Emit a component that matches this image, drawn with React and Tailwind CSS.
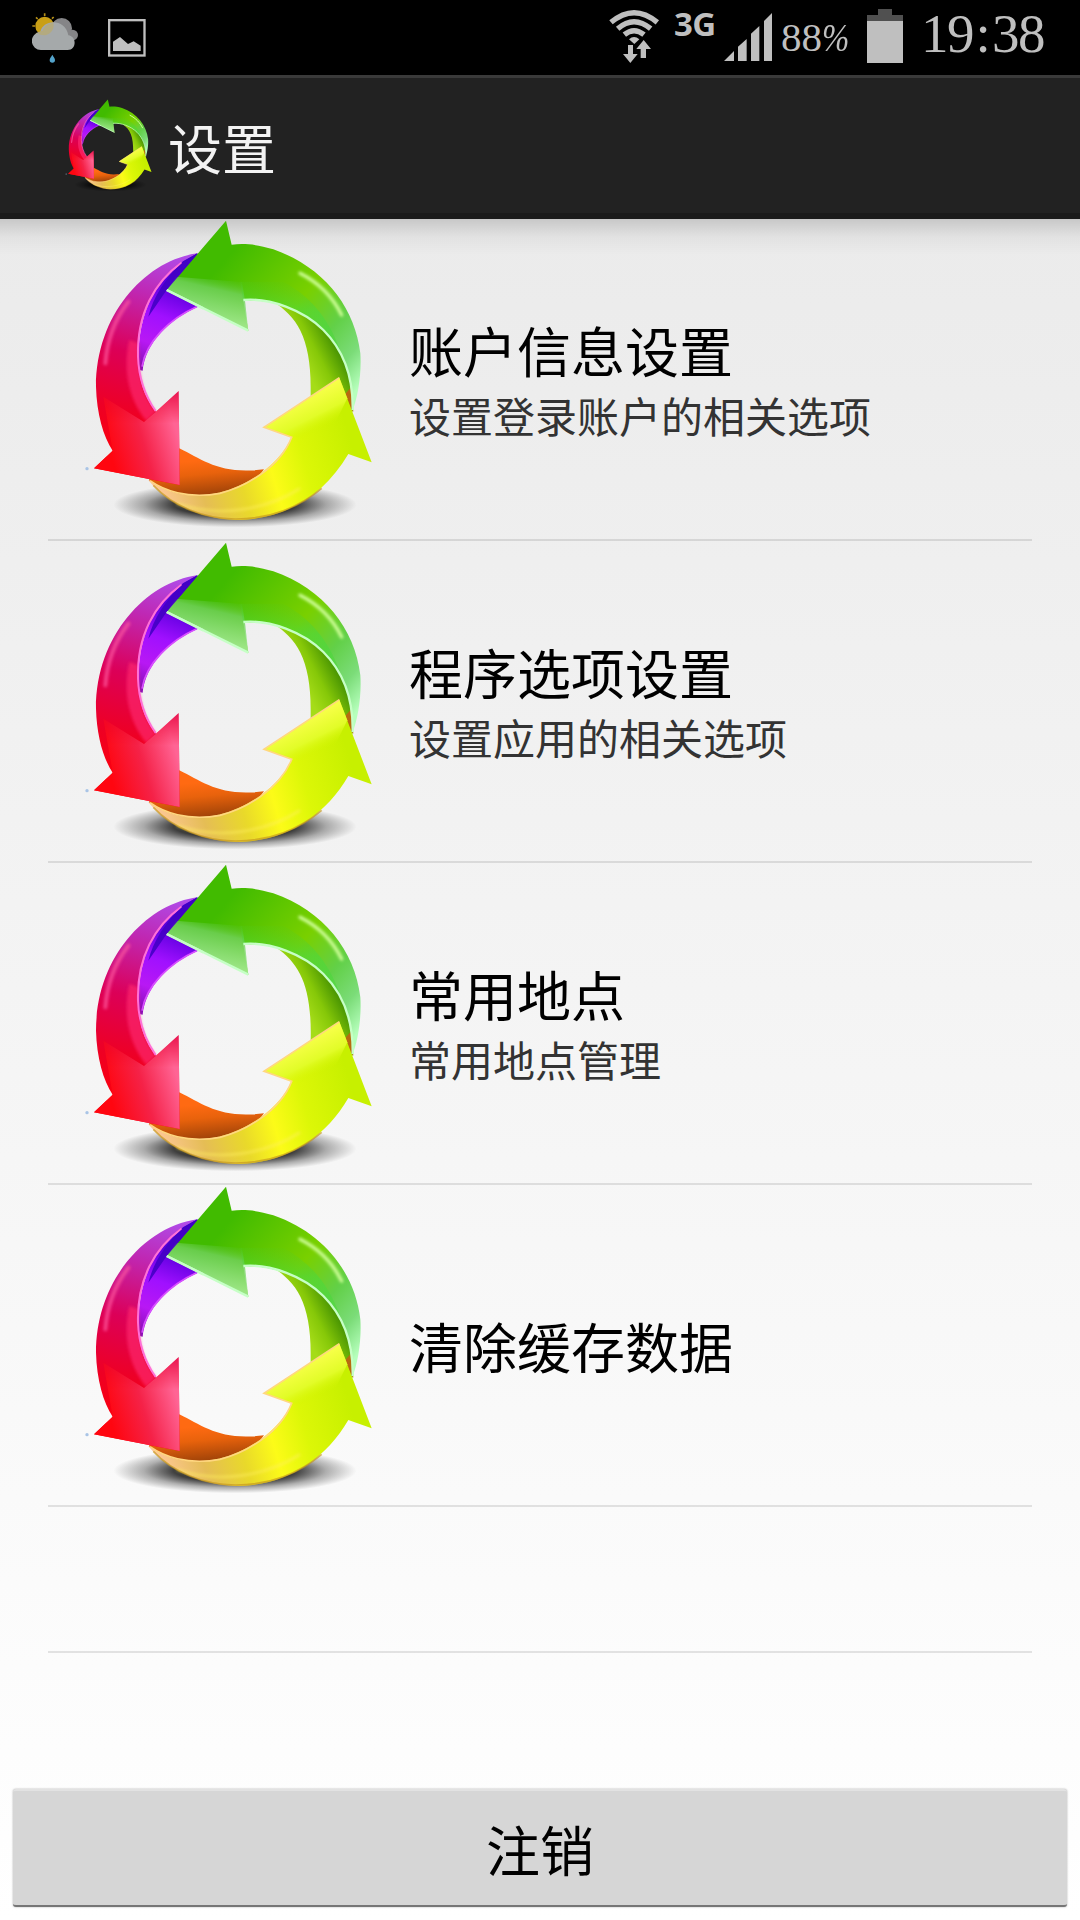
import { useId } from "react";

function RecycleIcon({ className }) {
  const id = useId().replace(/[^a-zA-Z0-9]/g, "");
  const u = (n) => `url(#${id}${n})`;
  return (
    <svg viewBox="0 27 960 960" className={className} aria-hidden="true">
      <defs>
        <linearGradient id={id + "red"} gradientUnits="userSpaceOnUse" x1="340" y1="140" x2="170" y2="780">
          <stop offset="0" stopColor="#b04be8" />
          <stop offset="0.2" stopColor="#bf28b4" />
          <stop offset="0.48" stopColor="#dc0058" />
          <stop offset="0.75" stopColor="#ee0024" />
          <stop offset="1" stopColor="#ff0008" />
        </linearGradient>
        <linearGradient id={id + "head"} gradientUnits="userSpaceOnUse" x1="130" y1="760" x2="330" y2="700">
          <stop offset="0" stopColor="#ff0610" />
          <stop offset="0.5" stopColor="#f52248" />
          <stop offset="1" stopColor="#ff6494" />
        </linearGradient>
        <linearGradient id={id + "fade"} gradientUnits="userSpaceOnUse" x1="0" y1="520" x2="0" y2="640">
          <stop offset="0" stopColor="#fff" stopOpacity="0" />
          <stop offset="1" stopColor="#fff" />
        </linearGradient>
        <mask id={id + "mask"} maskUnits="userSpaceOnUse" x="0" y="0" width="960" height="1000">
          <rect width="960" height="1000" fill={u("fade")} />
        </mask>
        <linearGradient id={id + "violet"} gradientUnits="userSpaceOnUse" x1="350" y1="140" x2="230" y2="470">
          <stop offset="0" stopColor="#3700c8" />
          <stop offset="0.3" stopColor="#6000e0" />
          <stop offset="0.55" stopColor="#a010ff" />
          <stop offset="0.8" stopColor="#b818f4" />
          <stop offset="1" stopColor="#8a10b8" />
        </linearGradient>
        <linearGradient id={id + "green"} gradientUnits="userSpaceOnUse" x1="440" y1="180" x2="860" y2="540">
          <stop offset="0" stopColor="#41bb00" />
          <stop offset="0.45" stopColor="#79d000" />
          <stop offset="0.68" stopColor="#62d048" />
          <stop offset="0.85" stopColor="#7bdc78" />
          <stop offset="1" stopColor="#b6ffbc" />
        </linearGradient>
        <linearGradient id={id + "gleam"} gradientUnits="userSpaceOnUse" x1="440" y1="190" x2="410" y2="320">
          <stop offset="0" stopColor="#50c020" stopOpacity="0" />
          <stop offset="0.35" stopColor="#6fd058" />
          <stop offset="1" stopColor="#a4ea9a" />
        </linearGradient>
        <linearGradient id={id + "under"} gradientUnits="userSpaceOnUse" x1="600" y1="200" x2="590" y2="290">
          <stop offset="0" stopColor="#50c828" stopOpacity="0" />
          <stop offset="1" stopColor="#4cd83c" />
        </linearGradient>
        <linearGradient id={id + "moss"} gradientUnits="userSpaceOnUse" x1="715" y1="490" x2="830" y2="430">
          <stop offset="0" stopColor="#a5dc18" />
          <stop offset="0.4" stopColor="#86c808" />
          <stop offset="1" stopColor="#358400" />
        </linearGradient>
        <linearGradient id={id + "yellow"} gradientUnits="userSpaceOnUse" x1="250" y1="820" x2="830" y2="650">
          <stop offset="0" stopColor="#ffc89a" />
          <stop offset="0.22" stopColor="#e5bd55" />
          <stop offset="0.42" stopColor="#e9d92a" />
          <stop offset="0.58" stopColor="#fcfb18" />
          <stop offset="0.75" stopColor="#dcf707" />
          <stop offset="1" stopColor="#c7f000" />
        </linearGradient>
        <linearGradient id={id + "tip"} gradientUnits="userSpaceOnUse" x1="700" y1="560" x2="750" y2="660">
          <stop offset="0" stopColor="#f8ff4a" />
          <stop offset="0.6" stopColor="#e2fc28" />
          <stop offset="1" stopColor="#d2f400" stopOpacity="0" />
        </linearGradient>
        <linearGradient id={id + "orange"} gradientUnits="userSpaceOnUse" x1="400" y1="750" x2="410" y2="855">
          <stop offset="0" stopColor="#ff6a12" />
          <stop offset="0.4" stopColor="#e8620c" />
          <stop offset="1" stopColor="#a04308" />
        </linearGradient>
        <radialGradient id={id + "shade"}>
          <stop offset="0" stopColor="#000" />
          <stop offset="0.5" stopColor="#000" stopOpacity="0.75" />
          <stop offset="0.75" stopColor="#000" stopOpacity="0.3" />
          <stop offset="1" stopColor="#000" stopOpacity="0" />
        </radialGradient>
        <filter id={id + "soft"} x="-30%" y="-30%" width="160%" height="160%">
          <feGaussianBlur stdDeviation="5" />
        </filter>
      </defs>
      <ellipse cx="495" cy="884" rx="365" ry="68" fill={u("shade")} />
      <path d="M382 130C290 160 190 290 208 480L218 482C225 400 300 325 385 290L420 200Z" fill={u("violet")} />
      <path d="M216 470C228 395 300 325 380 290" fill="none" stroke="#d850ff" strokeWidth="5" />
      <path d="M620 282C690 330 726 400 722 560L848 605C858 470 800 350 700 290Z" fill={u("moss")} />
      <path d="M845 530L850 605L818 560Z" fill="#b86a10" />
      <path d="M328 715C400 750 450 795 582 778C540 840 460 870 380 866C320 862 270 845 236 810Z" fill={u("orange")} />
      <path d="M235 810C290 845 330 857 400 855C500 850 625 775 665 682L582 652L808 503L905 757L835 732C760 860 640 930 495 930C390 925 290 880 235 810Z" fill={u("yellow")} />
      <path d="M582 652L808 503L832 565L770 690L712 692Z" fill={u("tip")} />
      <path d="M808 503L582 652L665 682C630 770 530 830 450 850C350 868 280 840 240 812" fill="none" stroke="#ffd780" strokeWidth="5" />
      <path d="M320 880C440 925 590 900 690 835" fill="none" stroke="#fff060" strokeWidth="8" opacity="0.55" filter={u("soft")} />
      <path d="M250 826C310 890 400 925 495 927C600 928 690 890 755 835" fill="none" stroke="#c89a20" strokeWidth="5" opacity="0.7" />
      <path d="M468 32L290 240L535 362L520 272C600 265 700 300 760 360C820 420 850 500 848 600C864 560 875 490 871 430C855 290 760 170 610 118C560 102 520 100 485 104Z" fill={u("green")} />
      <path d="M318 200L516 216L525 272L535 362L290 240Z" fill={u("gleam")} opacity="0.85" />
      <path d="M510 215L640 215C715 255 775 320 810 420C730 300 620 262 520 272Z" fill={u("under")} opacity="0.6" />
      <path d="M290 240L535 362M520 270C600 263 700 300 760 360C820 420 850 500 848 600" fill="none" stroke="#c6ffc6" strokeWidth="7" />
      <path d="M690 190C750 220 790 265 815 315" fill="none" stroke="#d0ff9a" strokeWidth="10" strokeLinecap="round" filter={u("soft")} />
      <path d="M382 130C230 150 78 310 78 530C80 610 100 680 128 722L72 775L329 825L326 543L258 605C215 550 206 500 204 430C206 310 255 220 340 153Z" fill={u("red")} />
      <path d="M206 400C206 500 215 550 258 605L230 634C170 560 160 470 178 390Z" fill="#ff2a70" opacity="0.65" filter={u("soft")} />
      <path d="M128 722L72 775L329 825L326 543L258 605L222 636L100 560Z" fill={u("head")} mask={u("mask")} />
      <path d="M335 158C255 215 200 310 204 440C206 500 220 550 257 603" fill="none" stroke="#ff70d8" strokeWidth="6" />
      <path d="M106 460C112 380 140 320 175 275" fill="none" stroke="#ff5aa0" strokeWidth="12" strokeLinecap="round" opacity="0.7" filter={u("soft")} />
      <path d="M382 130L340 155C285 205 250 260 235 320L290 240L380 134Z" fill="#4300c4" opacity="0.9" />
      <path d="M290 240L400 295" stroke="#c6ffc6" strokeWidth="7" />
      <circle cx="51" cy="776" r="5" fill="#a9c4e6" />
    </svg>
  );
}

function WeatherIcon() {
  return (
    <svg viewBox="96 36 141 153" className="mt-3 ml-8 h-[51px] w-[47px] shrink-0">
      <g stroke="#b58f18" strokeWidth="5">
        <path d="M134 40v8M134 108v8M97 78h8M164 78h8M108 52l5 5M161 51l-5 5M108 104l5-5M161 104l-5-5" />
      </g>
      <circle cx="134" cy="78" r="28" fill="#c99f16" />
      <circle cx="185" cy="85" r="31" fill="#858587" />
      <circle cx="218" cy="105" r="16" fill="#858587" />
      <path d="M124 150a27 27 0 0 1-3-54C128 56 197 54 205 106c26 3 25 44-2 44Z" fill="#a5a9aa" />
      <path d="M128 92c5-14 18-23 32-23 4 16-6 32-21 36-10 2-20 0-27-6 5-4 10-6 16-7Z" fill="#b3aa80" />
      <path d="M157 164c3 7 8 10 8 16a8 8 0 0 1-16 0c0-6 5-9 8-16Z" fill="#53a3cb" />
    </svg>
  );
}

function PictureIcon() {
  return (
    <svg viewBox="324 57 114 114" className="mt-[19px] ml-[29px] size-[38px] shrink-0">
      <rect x="327.500" y="60.500" width="106" height="106" fill="none" stroke="#bfbfbf" strokeWidth="7" />
      <path d="M339 153v-28l21-14 24 21 17-8 21 13v16Z" fill="#bfbfbf" />
    </svg>
  );
}

function StatusBar() {
  return (
    <div className="flex h-[75px] items-start bg-black text-[#bfbfbf]">
      <WeatherIcon />
      <PictureIcon />
      <svg viewBox="84 24 156 168" className="mt-2 ml-[462px] h-14 w-[52px] shrink-0">
        <g fill="none" stroke="#bfbfbf" strokeWidth="16">
          <path d="M93 67Q162 9 232 67M113 86Q162 44 212 86M133 104Q162 80 192 104" />
        </g>
        <path d="M147 118Q162 104 178 118L163 132Z" fill="#bfbfbf" />
        <path d="M144 135h15v27h14L151 189 129 162h15ZM182 174h16v-27h15L191 120 169 147h13Z" fill="#bfbfbf" />
      </svg>
      <span className="mt-[1px] ml-[14px] w-[50px] font-['Open_Sans',sans-serif] text-[33px] leading-[46px] font-bold tracking-[-0.5px]">3G</span>
      <svg viewBox="432 36 144 150" className="mt-3 h-[50px] w-12 shrink-0">
        <path d="M432 183L462 153V183ZM474 183V140L500 117V183ZM513 183V101L538 78V183ZM552 183V63L576 39V183Z" fill="#bfbfbf" />
      </svg>
      <span className="mt-[13px] ml-[9px] flex w-[86px] font-['Liberation_Serif',serif] text-[41px] leading-[48px]">
        88<span className="origin-left scale-x-80 italic">%</span>
      </span>
      <span className="mt-[9px] flex w-9 shrink-0 flex-col items-center">
        <span className="h-[6px] w-[14px] bg-[#505050]" />
        <span className="h-[6px] w-9 bg-[#505050]" />
        <span className="h-[42px] w-9 bg-[#bfbfbf]" />
      </span>
      <span className="mt-[2px] ml-[18px] flex font-['Liberation_Serif',serif] text-[55px] leading-[64px] tracking-[-1.5px]">
        19<span className="w-[19px] text-center">:</span>38
      </span>
    </div>
  );
}

const items = [
  { title: "账户信息设置", note: "设置登录账户的相关选项" },
  { title: "程序选项设置", note: "设置应用的相关选项" },
  { title: "常用地点", note: "常用地点管理" },
  { title: "清除缓存数据" },
];

export default function App() {
  return (
    <div className="flex h-[1920px] w-[1080px] flex-col overflow-hidden bg-white font-['KaiTi','Noto_Sans_CJK_SC',sans-serif]">
      <StatusBar />
      <header className="flex h-36 items-start border-t-3 border-b-6 border-t-[#3a3a3a] border-b-[#1b1b1b] bg-[#222222]">
        <RecycleIcon className="mt-[21px] ml-[61px] size-24 shrink-0" />
        <h1 className="mt-[29px] ml-[11px] text-[54px] leading-[80px] font-normal text-[#f3f3f3]">设置</h1>
      </header>
      <main className="flex flex-1 flex-col bg-linear-to-b from-[#ebebeb] to-white">
        <div className="-mb-9 h-9 shrink-0 bg-linear-to-b from-black/15 via-black/4 to-transparent" />
        <ul className="mx-12">
          {items.map((item) => (
            <li key={item.title} className="flex h-[322px] items-center border-b-2 border-black/10 pl-[22px]">
              <RecycleIcon className="size-80 shrink-0" />
              <div className="mt-[2px] ml-[19px]">
                <p className="text-[54px] leading-[70px] text-black">{item.title}</p>
                {item.note && <p className="text-[42px] leading-[60px] text-[#333333]">{item.note}</p>}
              </div>
            </li>
          ))}
          <li className="h-[146px] border-b-2 border-black/10" />
        </ul>
        <button className="mx-[13px] mt-auto mb-[13px] h-[118px] rounded-[3px] border-t-2 border-b-2 border-t-[#e2e2e2] border-b-[#767676] bg-[#d6d6d6] text-[54px] text-black shadow-[0_0_2px_rgba(0,0,0,0.35)]">
          注销
        </button>
      </main>
    </div>
  );
}
